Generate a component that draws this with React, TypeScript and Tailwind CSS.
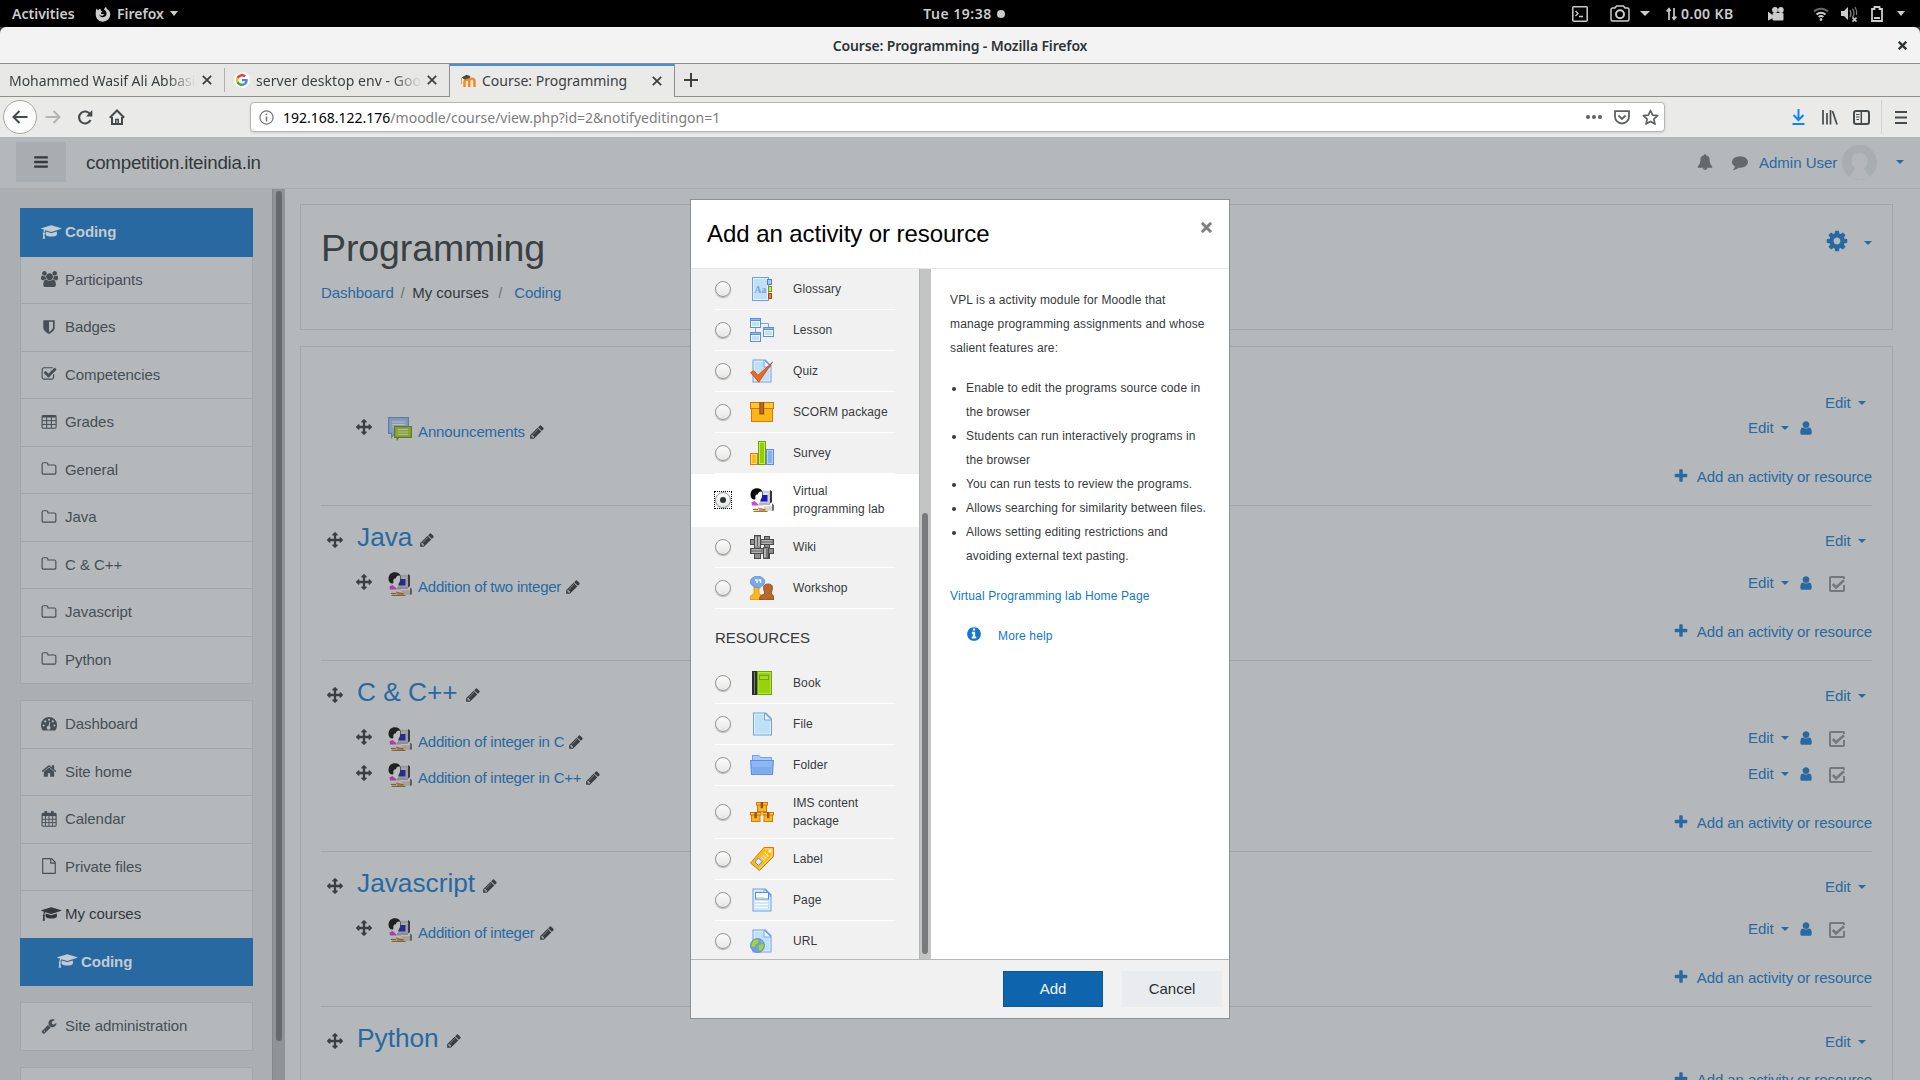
import React from "react";

/* ---------- glyph icons on a 1792 grid ---------- */
const P = {
  folder: "M1600 1312v-704q0-40-28-68t-68-28h-704q-40 0-68-28t-28-68v-64q0-40-28-68t-68-28h-320q-40 0-68 28t-28 68v960q0 40 28 68t68 28h1216q40 0 68-28t28-68zm128-704v704q0 92-66 158t-158 66h-1216q-92 0-158-66t-66-158v-960q0-92 66-158t158-66h320q92 0 158 66t66 158v32h672q92 0 158 66t66 158z",
  plus: "M1600 736v192q0 40-28 68t-68 28h-416v416q0 40-28 68t-68 28h-192q-40 0-68-28t-28-68v-416h-416q-40 0-68-28t-28-68v-192q0-40 28-68t68-28h416v-416q0-40 28-68t68-28h192q40 0 68 28t28 68v416h416q40 0 68 28t28 68z",
  user: "M1536 1399q0 109-62.5 187t-150.500 78h-854q-88 0-150.500-78t-62.500-187q0-85 8.500-160.500t31.500-152 58.500-131 94-89 134.500-34.500q131 128 313 128t313-128q76 0 134.500 34.500t94 89 58.500 131 31.500 152 8.500 160.500zm-256-887q0 159-112.500 271.500t-271.500 112.500-271.500-112.500-112.500-271.500 112.500-271.500 271.500-112.500 271.500 112.500 112.500 271.500z",
  arrows: "M1792 896q0 26-19 45l-256 256q-19 19-45 19t-45-19-19-45v-128h-384v384h128q26 0 45 19t19 45-19 45l-256 256q-19 19-45 19t-45-19l-256-256q-19-19-19-45t19-45 45-19h128v-384h-384v128q0 26-19 45t-45 19-45-19l-256-256q-19-19-19-45t19-45l256-256q19-19 45-19t45 19 19 45v128h384v-384h-128q-26 0-45-19t-19-45 19-45l256-256q19-19 45-19t45 19l256 256q19 19 19 45t-19 45-45 19h-128v384h384v-128q0-26 19-45t45-19 45 19l256 256q19 19 19 45z",
  pencil: "M491 1536l91-91-235-235-91 91v107h128v128h107zm523-928q0-22-22-22-10 0-17 7l-542 542q-7 7-7 17 0 22 22 22 10 0 17-7l542-542q7-7 7-17zm-54-192l416 416-832 832h-416v-416zm683 96q0 53-37 90l-166 166-416-416 166-165q36-38 90-38 53 0 91 38l235 234q37 39 37 91z",
  bars: "M1664 1344v128q0 26-19 45t-45 19h-1408q-26 0-45-19t-19-45v-128q0-26 19-45t45-19h1408q26 0 45 19t19 45zm0-512v128q0 26-19 45t-45 19h-1408q-26 0-45-19t-19-45v-128q0-26 19-45t45-19h1408q26 0 45 19t19 45zm0-512v128q0 26-19 45t-45 19h-1408q-26 0-45-19t-19-45v-128q0-26 19-45t45-19h1408q26 0 45 19t19 45z",
  cap: "M1774 836l18 316q4 69-82 128t-235 93.500-323 34.500-323-34.500-235-93.500-82-128l18-316 574 181q22 7 48 7t48-7zm530-324q0 23-22 31l-1120 352q-4 1-10 1t-10-1l-652-206q-43 34-71 111.500t-34 178.500q63 36 63 109 0 69-58 107l58 433q2 14-8 25-9 11-24 11h-192q-15 0-24-11-10-11-8-25l58-433q-58-38-58-107 0-73 65-111 11-207 98-330l-333-104q-22-8-22-31t22-31l1120-352q4-1 10-1t10 1l1120 352q22 8 22 31z",
  home: "M1472 992v480q0 26-19 45t-45 19h-384v-384h-256v384h-384q-26 0-45-19t-19-45v-480q0-1 .5-3t.5-3l575-474 575 474q1 2 1 6zm223-69l-62 74q-8 9-21 11h-3q-13 0-21-7l-692-577-692 577q-12 8-24 7-13-2-21-11l-62-74q-8-10-7-23.500t11-21.500l719-599q32-26 76-26t76 26l244 204v-195q0-14 9-23t23-9h192q14 0 23 9t9 23v408l219 182q10 8 11 21.500t-7 23.500z",
  file: "M1596 380q28 28 48 76t20 88v1152q0 40-28 68t-68 28h-1344q-40 0-68-28t-28-68v-1600q0-40 28-68t68-28h896q40 0 88 20t76 48zm-444-244v376h376q-10-29-22-41l-313-313q-12-12-41-22zm384 1528v-1024h-416q-40 0-68-28t-28-68v-416h-768v1536h1280z",
  wrench: "M448 1472q0-26-19-45t-45-19-45 19-19 45 19 45 45 19 45-19 19-45zm644-420l-682 682q-37 37-90 37-52 0-91-37l-106-108q-38-36-38-90 0-53 38-91l681-681q39 98 114.500 173.500t173.500 114.500zm634-435q0 39-23 106-47 134-164.500 217.500t-258.500 83.500q-185 0-316.500-131.500t-131.500-316.500 131.500-316.500 316.500-131.500q58 0 121.500 16.500t107.500 46.500q16 11 16 28t-16 28l-293 169v224l193 107q5-3 79-48.500t135.500-81 70.500-35.500q15 0 23.500 10t8.500 25z",
  check: "M1472 930v318q0 119-84.500 203.500t-203.500 84.500h-832q-119 0-203.500-84.500t-84.500-203.500v-832q0-119 84.500-203.500t203.500-84.500h832q63 0 117 25 15 7 18 23 3 17-9 29l-49 49q-10 10-23 10-3 0-9-2-23-6-45-6h-832q-66 0-113 47t-47 113v832q0 66 47 113t113 47h832q66 0 113-47t47-113v-254q0-13 9-22l64-64q10-10 23-10 6 0 12 3 20 8 20 29zm231-489l-814 814q-24 24-57 24t-57-24l-430-430q-24-24-24-57t24-57l110-110q24-24 57-24t57 24l263 263 647-647q24-24 57-24t57 24l110 110q24 24 24 57t-24 57z",
  info: "M1152 1376v-160q0-14-9-23t-23-9h-96v-512q0-14-9-23t-23-9h-320q-14 0-23 9t-9 23v160q0 14 9 23t23 9h96v320h-96q-14 0-23 9t-9 23v160q0 14 9 23t23 9h448q14 0 23-9t9-23zm-128-896v-160q0-14-9-23t-23-9h-192q-14 0-23 9t-9 23v160q0 14 9 23t23 9h192q14 0 23-9t9-23zm640 416q0 209-103 385.500t-279.500 279.500-385.500 103-385.500-103-279.500-279.500-103-385.500 103-385.500 279.500-279.500 385.500-103 385.500 103 279.500 279.500 103 385.500z",
  cog: "M1152 896q0-106-75-181t-181-75-181 75-75 181 75 181 181 75 181-75 75-181zm512-109v222q0 12-8 23t-20 13l-185 28q-19 54-39 91 35 50 107 138 10 12 10 25t-9 23q-27 37-99 108t-94 71q-12 0-26-9l-138-108q-44 23-91 38-16 136-29 186-7 28-36 28h-222q-14 0-24.500-8.500t-11.500-21.500l-28-184q-49-16-90-37l-141 107q-10 9-25 9-14 0-25-11-126-114-165-168-7-10-7-23 0-12 8-23 15-21 51-66.500t54-70.500q-27-50-41-99l-183-27q-13-2-21-12.500t-8-23.500v-222q0-12 8-23t19-13l186-28q14-46 39-92-40-57-107-138-10-12-10-24 0-10 9-23 26-36 98.500-107.500t94.500-71.500q13 0 26 10l138 107q44-23 91-38 16-136 29-186 7-28 36-28h222q14 0 24.500 8.500t11.500 21.500l28 184q49 16 90 37l142-107q9-9 24-9 13 0 25 10 129 119 165 170 7 8 7 22 0 12-8 23-15 21-51 66.500t-54 70.500q26 50 41 98l183 28q13 2 21 12.500t8 23.500z",
  bell: "M912 1696q0-16-16-16-59 0-101.500-42.500t-42.500-101.500q0-16-16-16t-16 16q0 73 51.500 124.500t124.500 51.500q16 0 16-16zm816-288q0 52-38 90t-90 38h-448q0 106-75 181t-181 75-181-75-75-181h-448q-52 0-90-38t-38-90q50-42 91-88t85-119.500 74.500-158.500 50-206 19.500-260q0-152 117-282.500t307-158.500q-8-19-8-39 0-40 28-68t68-28 68 28 28 68q0 20-8 39 190 28 307 158.500t117 282.500q0 139 19.500 260t50 206 74.500 158.500 85 119.500 91 88z",
  comment: "M1792 896q0 174-120 321.500t-326 233-450 85.500q-70 0-145-8-198 175-460 242-49 14-114 22-17 2-30.500-9t-17.500-29v-1q-3-4-.5-12t2-10 4.500-9.500l6-9 7-8.500 8-9q7-8 31-34.500t34.500-38 31-39.500 32.500-51 27-59 26-76q-157-89-247.500-220t-90.500-281q0-130 71-248.500t191-204.500 286-136.500 348-50.500q244 0 450 85.500t326 233 120 321.500z",
  users: "M593 896q-162 5-265 128h-134q-82 0-138-40.500t-56-118.500q0-353 124-353 6 0 43.500 21t97.500 42.500 119 21.500q67 0 133-23-5 37-5 66 0 139 81 256zm1071 637q0 120-73 189.500t-194 69.500h-874q-121 0-194-69.500t-73-189.500q0-53 3.500-103.500t14-109 26.500-108.500 43-97.500 62-81 85.500-53.500 111.500-20q10 0 43 21.500t73 48 107 48 135 21.500 135-21.500 107-48 73-48 43-21.500q61 0 111.500 20t85.500 53.500 62 81 43 97.500 26.500 108.500 14 109 3.500 103.500zm-1024-1277q0 106-75 181t-181 75-181-75-75-181 75-181 181-75 181 75 75 181zm704 384q0 159-112.500 271.500t-271.500 112.500-271.500-112.500-112.500-271.500 112.500-271.500 271.500-112.500 271.500 112.500 112.500 271.500zm576 225q0 78-56 118.500t-138 40.500h-134q-103-123-265-128 81-117 81-256 0-29-5-66 66 23 133 23 59 0 119-21.500t97.500-42.500 43.500-21q124 0 124 353zm-128-609q0 106-75 181t-181 75-181-75-75-181 75-181 181-75 181 75 75 181z",
  shield: "M1344 960v-640h-448v1137q119-63 213-137 235-184 235-360zm192-768v768q0 86-33.500 170.500t-83 150-118 127.500-126.500 103-121 77.500-89.500 49.500-42.500 20q-12 6-26 6t-26-6q-16-7-42.500-20t-89.500-49.500-121-77.500-126.500-103-118-127.500-83-150-33.500-170.500v-768q0-26 19-45t45-19h1152q26 0 45 19t19 45z",
};

type GlyphName = keyof typeof P;

function Glyph({ name, size = 16, className = "" }: { name: GlyphName; size?: number; className?: string }) {
  const vw = name === "cap" ? 2304 : name === "users" ? 1920 : 1792;
  return (
    <svg width={(size * vw) / 1792} height={size} viewBox={`0 0 ${vw} 1792`} fill="currentColor" className={`shrink-0 ${className}`}>
      <path d={P[name]} />
    </svg>
  );
}

function TableIcon() {
  return (
    <svg width="16" height="16" viewBox="0 0 16 16" fill="none" stroke="currentColor">
      <rect x="1.1" y="1.600" width="14" height="12.600" rx="1.2" strokeWidth="1.1" />
      <path d="M1 2.500h14" strokeWidth="2" />
      <path d="M1 6.700h14M1 10.400h14M5.700 3v11M10.400 3v11" strokeWidth="1" />
    </svg>
  );
}

function CalendarIcon() {
  return (
    <svg width="16" height="16" viewBox="0 0 16 16" fill="none" stroke="currentColor">
      <rect x="1.1" y="2.2" width="14" height="13" rx="1" strokeWidth="1.1" />
      <path d="M1 3.6h14" strokeWidth="3" />
      <path d="M4.800 0.300v3.200M11.300 0.300v3.200" strokeWidth="2.600" strokeLinecap="round" />
      <path d="M1 8.300h14M1 11.600h14M4.500 5v10M8 5v10M11.600 5v10" strokeWidth="0.900" />
    </svg>
  );
}

function GaugeIcon() {
  return (
    <svg width="16" height="16" viewBox="0 0 16 16">
      <path d="M0 9a8 8 0 0 1 16 0c0 2-.6 3.500-1.500 5.100-.2.400-.4.500-.8.500H2.300c-.4 0-.6-.1-.8-.5C.6 12.500 0 11 0 9z" fill="currentColor" />
      <g fill="#b4b8bb">
        <circle cx="2.600" cy="9.500" r="1.050" />
        <circle cx="4.200" cy="5.400" r="1.050" />
        <circle cx="8" cy="3.700" r="1.050" />
        <circle cx="11.800" cy="5.400" r="1.050" />
        <circle cx="13.400" cy="9.500" r="1.050" />
        <path d="M8.500 5.800l.8.200-.6 4a2 2 0 1 1-1.200-.3z" />
      </g>
    </svg>
  );
}

function Caret() {
  return <span className="block h-0 w-0 border-x-[4px] border-t-[4px] border-x-transparent border-t-[#2869a2]" />;
}

/* ---------- activity pictures ---------- */
const sheet = "M2.500.5h13l6 6v17h-19z";
function Sheet({ x = 0 }: { x?: number }) {
  return (
    <g transform={`translate(${x} 0)`}>
      <path d={sheet} fill="#6f9de8" />
      <path d="M3.500 1.500h11l6 6v15h-17z" fill="#e4f4fd" />
      <path d="M4.500 2.500h10v5.500h5v13.500h-15z" fill="#bfe1f8" />
      <path d="M14 1v7h7z" fill="#e9f6fe" stroke="#78a4ea" strokeWidth="1" />
    </g>
  );
}

function Box({ x, y, w, h }: { x: number; y: number; w: number; h: number }) {
  return (
    <g>
      <rect x={x + 1} y={y + h * 0.3} width={w - 2} height={h * 0.7} fill="#d87a12" />
      <rect x={x + 2} y={y + h * 0.3} width={w - 4} height={h * 0.7 - 1} fill="#fbb713" />
      <rect x={x} y={y} width={w} height={h * 0.35} fill="#d27415" />
      <rect x={x + 1} y={y + 1} width={w - 2} height={h * 0.35 - 2} fill="#fdc92d" />
      <rect x={x + w * 0.39} y={y} width={w * 0.2} height={h * 0.62} fill="#8a4a12" />
      <rect x={x + w * 0.39 + 1} y={y} width={w * 0.2 - 2 > 0 ? w * 0.2 - 2 : 0.6} height={h * 0.55} fill="#b8682a" />
    </g>
  );
}

function Win({ x, y }: { x: number; y: number }) {
  return (
    <g>
      <rect x={x} y={y} width="11" height="10" fill="#5a8fe0" />
      <rect x={x + 1} y={y + 3} width="9" height="6" fill="#eff8fe" />
      <rect x={x + 2} y={y + 4} width="7" height="4" fill="#bfe1f8" />
      <rect x={x + 1} y={y + 1} width="9" height="1" fill="#8db8f2" />
    </g>
  );
}

function Pic({ kind, dim = false }: { kind: string; dim?: boolean }) {
  return (
    <svg width="24" height="24" viewBox="0 0 24 24" className={dim ? "shrink-0 opacity-85 brightness-[.74]" : "shrink-0"}>
      {kind === "forum" && (
        <>
          <path d="M0 0h21v17H7l-4 5v-5H0z" fill="#6a9ae8" />
          <path d="M1.200 1.200h18.600v14.600H6.500L4 19v-3.200H1.200z" fill="#a9cdf8" />
          <path d="M4 5h13M4 7.500h13M4 10h13" stroke="#fff" strokeWidth="1" />
          <path d="M6 9h18v12H11l-2.500 3.500V21H6z" fill="#6f9c10" />
          <path d="M7.200 10.200h15.600v9.600H7.200z" fill="#aadb2a" />
          <path d="M10 12.500h10M10 15h10M10 17.500h10" stroke="#f4fbe0" strokeWidth="1" />
        </>
      )}
      {kind === "glossary" && (
        <>
          <rect x="2" y="0" width="17" height="24" fill="#6f9de8" />
          <rect x="3" y="1" width="15" height="22" fill="#e4f4fd" />
          <rect x="4" y="2" width="13" height="20" fill="#bfe1f8" />
          <text x="4.600" y="16" fontFamily="Liberation Serif, serif" fontWeight="700" fontSize="9.500" fill="#7ba0e4">Aa</text>
          <rect x="17.500" y="2.500" width="4" height="5" fill="#a9c7f6" stroke="#4c7fd8" />
          <rect x="18.500" y="9.500" width="3" height="5" fill="#cdea4c" stroke="#6f9c10" />
          <rect x="18.500" y="16.500" width="3" height="5" fill="#f07a30" stroke="#b94310" />
        </>
      )}
      {kind === "lesson" && (
        <>
          <path d="M11 5.500h7.500V9M5.500 10v4" stroke="#78a4ea" fill="none" />
          <Win x={0} y={0} />
          <Win x={13} y={9} />
          <Win x={0} y={14} />
        </>
      )}
      {kind === "quiz" && (
        <>
          <Sheet />
          <path d="M.5 13.500l3.500-1.800 3.800 4.600L22.500 3.200 8.800 23.200z" fill="#f0681c" stroke="#c24a10" strokeWidth=".8" />
        </>
      )}
      {kind === "scorm" && <Box x={0} y={2} w={24} h={20} />}
      {kind === "survey" && (
        <>
          <rect x=".5" y="12.500" width="7" height="11" fill="#fdb81a" stroke="#dc7c14" />
          <rect x="1.500" y="13.500" width="5" height="9" fill="none" stroke="#fedd7c" />
          <rect x="8.500" y=".5" width="7" height="23" fill="#93cc08" stroke="#6da30a" />
          <rect x="9.500" y="1.500" width="5" height="21" fill="none" stroke="#c3ee4c" />
          <rect x="16.500" y="8.500" width="7" height="15" fill="#86aef0" stroke="#5a8fe0" />
          <rect x="17.500" y="9.500" width="5" height="13" fill="none" stroke="#b5d3fa" />
        </>
      )}
      {kind === "vpl" && (
        <>
          <path d="M9 2h11l2 1.500V14l-2 1.500H10z" fill="#c9c9c9" />
          <path d="M20 2l2 1.500V14l-2 1.500z" fill="#333" />
          <path d="M9 2h11v1H9z" fill="#efefef" />
          <rect x="10" y="4.500" width="8.500" height="9" fill="#dedede" />
          <path d="M11.500 7h6v6.500h-7z" fill="#1414c8" />
          <path d="M3 10l5-7 4 1v6l-2 2v3l-5 1z" fill="#fff" />
          <path d="M.5 7C.5 2 4 0 7 .2c3 .1 5 1.300 5.500 3.800-2.500-1.200-4 0-4.500 2-.8 1-1.500 0-2.300 1.200-1 1.800.3 3-.7 4.300-2.800.2-4.500-2-4.500-4.500z" fill="#0a0a0a" />
          <path d="M12.500 4v4.500l-1.500 4" stroke="#333" strokeWidth=".7" fill="none" />
          <path d="M1.500 14.500l3-1.500 4 3.500v1H2z" fill="#e13be0" />
          <path d="M9 15h11v2.500H9z" fill="#b5b5b5" />
          <path d="M13 17h9l2 1.500V23l-9-.5z" fill="#d6d6d6" />
          <path d="M13 17h9v1.200h-9z" fill="#fff" />
          <path d="M22 15.500l2 1.500v5l-2 1z" fill="#6f6f6f" />
          <path d="M2.500 20.500h15l1 1.500-1 1H4z" fill="#e9d98a" />
          <path d="M3 21.500h5M9 22h6M3.500 23.500h14" stroke="#8a6a28" strokeWidth=".9" />
          <path d="M8 20l8 2" stroke="#d33" strokeWidth=".8" />
        </>
      )}
      {kind === "wiki" && (
        <g stroke="#4a4a4a" fill="#8e8e8e">
          <rect x="4.500" y=".5" width="6" height="23" />
          <rect x="14.500" y="1.500" width="5" height="22" />
          <rect x=".5" y="4.500" width="23" height="5" />
          <rect x=".5" y="13.500" width="23" height="5" />
          <path d="M4.500 11.500V.5h6v11M13.500 12.500h5v11h-5z" />
          <path d="M6 2v9M9 2v9M15 14v8M12 6h10M2 15h9M12 8h10M2 17h9" stroke="#d6d6d6" fill="none" />
          <path d="M7.500 1v10M17 14v9M11 7h12M1 16h11" stroke="#5e5e5e" fill="none" />
        </g>
      )}
      {kind === "workshop" && (
        <>
          <path d="M0 23.500v-3l4-3V11h5v6.500l4 3v3z" fill="#fdb81a" stroke="#dc8a14" strokeWidth=".8" />
          <ellipse cx="7.500" cy="5.800" rx="7.200" ry="5.600" fill="#7ca8f0" stroke="#5c8ee0" strokeWidth=".8" />
          <path d="M8 10l2 3.500 1-4z" fill="#7ca8f0" />
          <path d="M5 4h2v3M8.500 4h2v3" stroke="#fff" strokeWidth="1.300" fill="none" />
          <path d="M9.500 23.500c0-3 1-4.300 5-5.500v-2c-2-5-1.200-8 3.500-8s5.500 3 3.500 8v2c1.500.8 2.500 2 2.500 5.500z" fill="#b9672a" stroke="#8d4514" strokeWidth=".8" />
        </>
      )}
      {kind === "book" && (
        <>
          <rect x="2" y="0" width="6" height="24" fill="#2a2e26" />
          <rect x="4" y="1" width="1" height="22" fill="#777" />
          <rect x="7" y="0" width="15" height="24" fill="#6da30a" />
          <rect x="8" y="1" width="13" height="22" fill="#b4e83a" />
          <rect x="8.500" y="2" width="11.500" height="20" fill="#97d30b" />
          <rect x="9.500" y="4.500" width="9" height="4" fill="#a5dd22" stroke="#6da30a" />
        </>
      )}
      {kind === "file" && <Sheet x={0.5} />}
      {kind === "folder" && (
        <>
          <path d="M2 2h7l2 2h11v6H2z" fill="#74a3ec" />
          <path d="M3 3h6l2 2h10v4H3z" fill="#a6cbf8" />
          <path d="M0 7h24l-1 15H1z" fill="#5c8ee4" />
          <path d="M1.200 8h21.600l-.9 13H2.100z" fill="#8db6f4" />
          <path d="M2.500 14h19l-.5 6.500H3z" fill="#7fa9ee" />
        </>
      )}
      {kind === "ims" && (
        <>
          <Box x={6} y={2} w={12} h={10} />
          <Box x={0} y={12} w={11.5} h={10} />
          <Box x={12.5} y={12} w={11.5} h={10} />
        </>
      )}
      {kind === "label" && (
        <>
          <path d="M14 .5h9.500v9L9.500 23.500l-9-7.500z" fill="#fdb81a" stroke="#d07a14" />
          <path d="M14.500 2h7.500v7L9.500 21.500" fill="none" stroke="#fede80" strokeWidth=".9" />
          <circle cx="20" cy="4" r="1.600" fill="#fff" />
          <path d="M8.500 11l3.500 3.500-3.500 4L5 15z" fill="#dff1fd" stroke="#5c8ee0" />
          <path d="M11 10l3.500 3.500M13 8l3.500 3.500M15 6l3.500 3.500" stroke="#fff3c8" strokeWidth="1.100" />
        </>
      )}
      {kind === "page" && (
        <>
          <Sheet />
          <rect x="5.500" y="4.500" width="13" height="6.500" fill="#f4fbff" stroke="#5a8fe0" />
          <rect x="6" y="9" width="8" height="1.500" fill="#ecd9a0" />
          <path d="M5 13.500h13M5 16.500h13M5 19.500h13" stroke="#fff" strokeWidth="1.300" />
        </>
      )}
      {kind === "url" && (
        <>
          <Sheet />
          <circle cx="7.500" cy="16.500" r="7" fill="#6f9de8" stroke="#5484d8" strokeWidth=".8" />
          <path d="M2 14l3-3.500 4 .5-1 3-2.500 1.500L4 18.500 1.500 17zM9 16l4-1 1 2-2.500 4-2 1-1-3zM11 11.500l2.500 2-2 .5z" fill="#a4dc14" />
        </>
      )}
    </svg>
  );
}

/* ---------- desktop top bar ---------- */
function TopBar() {
  return (
    <div className="grid h-[27px] grid-cols-3 items-center bg-black text-[14px] font-semibold text-[#cccccc]">
      <div className="flex items-center pl-3">
        <span className="w-[83px] tracking-[0.02px]">Activities</span>
        <svg width="16" height="16" viewBox="0 0 16 16" className="mr-[6px]">
          <path d="M1.500 2.500L3 4.200C3.800 3 5.200 2.700 6 3c-.8.800-.6 1.500.6 1.900 1 .3.800.8 0 1.300-.9.500-1 1.400.1 1.700 1.200.3 2-.1 2.900.5-1 .2-1.300 1.300-3 1.300-1.200 0-2-.8-2.400-1.500.3 2 1.800 3 3.700 3 2.300 0 3.900-1.900 3.600-4.200C11.300 5.500 10.400 4.300 9 3.500c.6-1.300 1.200-2 2.200-2.700-.1 1.200.6 2 1.300 2.700 1.800.7 2.800 2.700 2.800 5A7.300 7.300 0 0 1 8 15.700C3.900 15.700.7 12.500.7 8.500c0-2.300.1-4.400.8-6z" fill="currentColor" />
        </svg>
        <span className="w-[48px]">Firefox</span>
        <span className="ml-[5px] h-0 w-0 border-x-[4.500px] border-t-[5px] border-x-transparent border-t-[#cccccc]" />
      </div>
      <div className="flex items-center justify-center gap-[5px] pl-[8px]">
        <span className="tracking-[0.5px]">Tue 19:38</span>
        <span className="h-2 w-2 rounded-full bg-[#cccccc]" />
      </div>
      <div className="flex items-center justify-end pr-[15px]">
        <svg width="16" height="16" viewBox="0 0 16 16" fill="none" stroke="currentColor" className="mr-[22px]">
          <rect x=".8" y=".8" width="14.400" height="14.400" rx="1" strokeWidth="1.500" />
          <path d="M3.500 5l2.500 2.500L3.500 10M7 10.500h4" strokeWidth="1.300" />
        </svg>
        <svg width="20" height="17" viewBox="0 0 20 17" fill="none" stroke="currentColor" strokeWidth="1.500" className="mr-[10px]">
          <path d="M1 4.500a1.500 1.500 0 0 1 1.500-1.500H5l1.500-2h7L15 3h2.500A1.500 1.500 0 0 1 19 4.500v10a1.500 1.500 0 0 1-1.500 1.500h-15A1.500 1.500 0 0 1 1 14.500z" />
          <circle cx="10" cy="9.200" r="4" strokeWidth="2" />
        </svg>
        <span className="mr-[16px] h-0 w-0 border-x-[5px] border-t-[5px] border-x-transparent border-t-[#cccccc]" />
        <svg width="11" height="14" viewBox="0 0 11 14" fill="none" stroke="currentColor" strokeWidth="1.700" className="mr-[4px]">
          <path d="M3 13V2M.7 4.500L3 1.700l1.500 2.200M8 1v11M6.500 10L8 12.300l2.300-2.800" />
        </svg>
        <span className="mr-[31px] w-[56px] whitespace-nowrap tracking-[0.4px]">0.00 KB</span>
        <svg width="16" height="14" viewBox="0 0 16 14" fill="currentColor" className="mr-[29px]">
          <circle cx="7" cy="3" r="2.900" />
          <circle cx="12.800" cy="3" r="2.900" />
          <rect x="4.500" y="6" width="11" height="7.500" rx="1" />
          <path d="M0 4.500l5 4v2.500l-5 2.500z" />
        </svg>
        <svg width="16" height="14" viewBox="0 0 16 14" fill="none" stroke="currentColor" strokeWidth="2" className="mr-[12px]">
          <path d="M1 4.500a10 10 0 0 1 14 0" stroke="#666" />
          <path d="M3.500 7.500a6.500 6.500 0 0 1 9 0" />
          <path d="M5.700 10a3.200 3.200 0 0 1 4.600 0" />
          <circle cx="8" cy="12.500" r="1" fill="currentColor" strokeWidth="1" />
        </svg>
        <svg width="18" height="16" viewBox="0 0 18 16" className="mr-[12px]">
          <path d="M0 5h3l4-4v13l-4-4H0z" fill="currentColor" />
          <path d="M9 4q2 3.500 0 7M11.500 2.500q3 5 0 9M14 1q2.500 4 1.500 8" stroke="#777" fill="none" strokeWidth="1.300" />
          <path d="M11.500 11.500l4 4M15.500 11.500l-4 4" stroke="currentColor" strokeWidth="1.700" />
        </svg>
        <svg width="12" height="16" viewBox="0 0 12 16" fill="none" className="mr-[14px]">
          <path d="M1 3h2.500V1h5v2H11v12H1z" stroke="currentColor" strokeWidth="1.800" />
          <path d="M3 12h6" stroke="currentColor" strokeWidth="2" />
        </svg>
        <span className="h-0 w-0 border-x-[4.500px] border-t-[5px] border-x-transparent border-t-[#cccccc]" />
      </div>
    </div>
  );
}

function Cross({ size = 10, width = 1.8, className = "" }: { size?: number; width?: number; className?: string }) {
  return (
    <svg width={size} height={size} viewBox="0 0 10 10" stroke="currentColor" strokeWidth={width} className={`shrink-0 ${className}`}>
      <path d="M.8.800l8.400 8.400M9.200.800L.800 9.200" />
    </svg>
  );
}

function TitleBar() {
  return (
    <div className="bg-[#3a3a3a]">
      <div className="grid h-[37px] grid-cols-[40px_1fr_40px] items-center rounded-t-[6px] border-b border-[#8f8f8a] bg-[#f3f3f3] text-[#2e3436]">
        <span />
        <span className="text-center text-[14px] font-semibold tracking-[-0.15px]">Course: Programming - Mozilla Firefox</span>
        <Cross size={9} width={2.6} className="ml-[18px]" />
      </div>
    </div>
  );
}

function TabStrip() {
  return (
    <div className="flex h-[33px] bg-[#e7e7e5] text-[14px] text-[#3b4143]">
      <div className="flex w-[224px] items-center border-b border-[#8f8f8a] pl-[9px]">
        <span className="w-[187px] overflow-hidden whitespace-nowrap tracking-[-0.05px] [mask-image:linear-gradient(to_right,black_84%,transparent)]">Mohammed Wasif Ali Abbasi</span>
        <Cross className="ml-[6px]" />
      </div>
      <div className="flex w-[225px] items-center border-b border-[#8f8f8a]">
        <span className="h-6 w-px bg-[#b0b0ac]" />
        <span className="ml-[9px] flex h-4 w-4 items-center justify-center rounded-full bg-white">
          <svg width="12" height="12" viewBox="0 0 48 48">
            <path fill="#EA4335" d="M24 9.500c3.540 0 6.710 1.220 9.210 3.600l6.850-6.850C35.900 2.380 30.470 0 24 0 14.620 0 6.510 5.380 2.560 13.220l7.980 6.190C12.430 13.720 17.740 9.500 24 9.500z" />
            <path fill="#4285F4" d="M46.980 24.550c0-1.570-.15-3.090-.38-4.550H24v9.020h12.940c-.58 2.960-2.260 5.480-4.780 7.180l7.730 6c4.510-4.180 7.090-10.360 7.090-17.650z" />
            <path fill="#FBBC05" d="M10.530 28.590c-.48-1.450-.76-2.990-.76-4.590s.27-3.140.76-4.590l-7.980-6.190C.92 16.460 0 20.120 0 24c0 3.880.92 7.540 2.560 10.780l7.970-6.190z" />
            <path fill="#34A853" d="M24 48c6.480 0 11.930-2.130 15.890-5.810l-7.730-6c-2.150 1.450-4.920 2.300-8.160 2.300-6.260 0-11.570-4.220-13.470-9.910l-7.980 6.190C6.510 42.620 14.620 48 24 48z" />
          </svg>
        </span>
        <span className="ml-[6px] w-[166px] overflow-hidden whitespace-nowrap tracking-[0.05px] [mask-image:linear-gradient(to_right,black_82%,transparent)]">server desktop env - Google</span>
        <Cross className="ml-[5px]" />
      </div>
      <div className="flex w-[226px] items-center border-x border-t-2 border-x-[#8f8f8a] border-t-[#4a90d9] bg-[#eaeae9] pb-[2px] pl-[10px]">
        <svg width="16" height="14" viewBox="0 0 16 14">
          <path d="M4.500 13V7.500a2.600 2.600 0 0 1 4.500-1M9.200 13V7.500a2.600 2.600 0 0 1 5.300 0V13" fill="none" stroke="#f58a1f" strokeWidth="2.500" />
          <path d="M1.500 3.500L6.500.8l4 1.400-1 2-5 1.300z" fill="#4a4a4a" />
          <path d="M1.500 4v6" stroke="#c8895a" strokeWidth=".8" />
        </svg>
        <span className="ml-[6px] w-[166px] whitespace-nowrap">Course: Programming</span>
        <Cross className="ml-[4px]" />
      </div>
      <div className="flex flex-1 items-center border-b border-[#8f8f8a] pl-[9px]">
        <svg width="14" height="14" viewBox="0 0 14 14" stroke="currentColor" strokeWidth="2">
          <path d="M7 0v14M0 7h14" />
        </svg>
      </div>
    </div>
  );
}

function ToolBar() {
  return (
    <div className="flex h-10 items-center bg-[#eaeae9] text-[#454b4d]">
      <div className="flex w-[250px] items-center pl-[3px]">
        <span className="flex h-[34px] w-[34px] items-center justify-center rounded-full border border-[#a8a8a4] bg-[#fbfbfb]">
          <svg width="16" height="14" viewBox="0 0 16 14" fill="none" stroke="currentColor" strokeWidth="2">
            <path d="M15.500 7H1.500M7.500 1L1.500 7l6 6" />
          </svg>
        </span>
        <svg width="16" height="14" viewBox="0 0 16 14" fill="none" stroke="#b3b5b5" strokeWidth="2" className="ml-[8px]">
          <path d="M.5 7h14M8.500 1l6 6-6 6" />
        </svg>
        <svg width="16" height="15" viewBox="0 0 16 15" className="ml-[16px]">
          <path d="M13.300 4.500A6 6 0 1 0 13.500 10" fill="none" stroke="currentColor" strokeWidth="2.100" />
          <path d="M15.300 0v6.500H9z" fill="currentColor" />
        </svg>
        <svg width="16" height="16" viewBox="0 0 16 16" fill="none" stroke="currentColor" className="ml-[16px]">
          <path d="M.8 8.700L8 1.500l7.200 7.200" strokeWidth="2" />
          <path d="M3 8v7h10V8" strokeWidth="2" />
          <path d="M6.800 15v-4.500h2.400V15" strokeWidth="1.500" />
        </svg>
      </div>
      <div className="flex h-[30px] w-[1415px] items-center rounded-[4px] border border-[#b6b6b2] bg-white pl-[8px] pr-[5px] shadow-sm">
        <svg width="15" height="15" viewBox="0 0 15 15" fill="none" stroke="#757575">
          <circle cx="7.500" cy="7.500" r="6.600" strokeWidth="1.200" />
          <path d="M7.500 6.500v5M7.500 3.500v1.600" strokeWidth="1.500" />
        </svg>
        <span className="ml-[9px] flex-1 text-[14px] text-[#7d7d7d]">
          <span className="text-black">192.168.122.176</span>/moodle/course/view.php?id=2&amp;notifyeditingon=1
        </span>
        <svg width="16" height="4" viewBox="0 0 16 4" fill="#5e6162">
          <circle cx="2" cy="2" r="2" />
          <circle cx="8" cy="2" r="2" />
          <circle cx="14" cy="2" r="2" />
        </svg>
        <svg width="16" height="15" viewBox="0 0 16 15" fill="none" stroke="#5e6162" strokeWidth="1.800" className="ml-[12px]">
          <path d="M1 1.200h14v5.300a7 7 0 0 1-14 0z" />
          <path d="M4.500 5.500L8 9l3.500-3.500" />
        </svg>
        <svg width="17" height="17" viewBox="0 0 17 17" fill="none" stroke="#5e6162" strokeWidth="1.700" strokeLinejoin="round" className="ml-[12px]">
          <path d="M8.500 1.500l2.100 4.700 5.100.5-3.900 3.400 1.200 5-4.500-2.700L4 15.100l1.200-5L1.300 6.700l5.100-.5z" />
        </svg>
      </div>
      <div className="flex flex-1 items-center">
        <svg width="13" height="16" viewBox="0 0 13 16" fill="none" stroke="#0a84ff" strokeWidth="2" className="ml-[127px]">
          <path d="M6.500 0v11M1.500 6l5 5 5-5M.5 15h12" />
        </svg>
        <svg width="16" height="15" viewBox="0 0 16 15" fill="none" stroke="currentColor" strokeWidth="2" className="ml-[17px]">
          <path d="M1 0v14.500M5 3v11.500M8.500 0v14.500M10.500 1l4.500 13.500" strokeWidth="1.700" />
        </svg>
        <svg width="17" height="15" viewBox="0 0 17 15" fill="none" stroke="currentColor" className="ml-[15px]">
          <rect x="1" y="1" width="15" height="13" rx="2" strokeWidth="2" />
          <path d="M8.300 1v13" strokeWidth="1.500" />
          <path d="M3 4.500h3.500M3 7h3.500M3.500 9.500H6" strokeWidth="1.100" />
        </svg>
        <span className="ml-[11px] h-[34px] w-px bg-[#d2d2cf]" />
        <svg width="12" height="13" viewBox="0 0 12 13" stroke="currentColor" strokeWidth="2" className="ml-[13px]">
          <path d="M0 1h12M0 6.500h12M0 12h12" />
        </svg>
      </div>
    </div>
  );
}

/* ---------- page ---------- */
function NavBar() {
  return (
    <div className="flex h-[52px] items-center border-b border-[#a9adb0] pb-px pl-4 pr-4">
      <span className="flex h-10 w-[50px] items-center justify-center bg-[#a8adb1] text-[#343a40]">
        <Glyph name="bars" size={16} />
      </span>
      <span className="ml-5 mt-px flex-1 text-[18.75px] leading-[22px] tracking-[-0.24px] text-[#33383a]">competition.iteindia.in</span>
      <Glyph name="bell" size={16} className="mr-[19px] text-[#62686b]" />
      <Glyph name="comment" size={16} className="mr-[11px] text-[#62686b]" />
      <span className="w-[83px] text-[15px] leading-[21px] text-[#2869a2]">Admin User</span>
      <svg width="35" height="35" viewBox="0 0 35 35" className="mr-[19px]">
        <circle cx="17.500" cy="17.500" r="17.500" fill="#a8adb0" />
        <path d="M17.500 8c-5 0-8 3.500-8 8 0 3.500 1.500 6 3.500 7.500L7.500 31.800a17.500 17.500 0 0 0 20 0L22 23.500c2-1.500 3.500-4 3.500-7.500 0-4.500-3-8-8-8z" fill="#b4b8bb" />
      </svg>
      <Caret />
    </div>
  );
}

function SideItem({ icon, label, active = false, indent = false, dark = false }: { icon: React.ReactNode; label: string; active?: boolean; indent?: boolean; dark?: boolean }) {
  return (
    <div
      className={`-mb-px flex h-[48.5px] shrink-0 items-center border pb-px text-[15px] leading-[21px] tracking-[-0.06px] ${
        active ? "relative border-[#2869a2] bg-[#2869a2] font-bold text-[#c3cad0]" : `border-[#a2a6a9] bg-[#b4b8bb] ${dark ? "text-[#33383b]" : "text-[#464e56]"}`
      } ${indent ? "pl-9" : "pl-5"}`}
    >
      <span className="flex w-6 items-center overflow-visible">{icon}</span>
      <span>{label}</span>
    </div>
  );
}

function Sidebar() {
  const cap = <Glyph name="cap" />;
  const folder = <Glyph name="folder" />;
  return (
    <div className="flex h-full w-[285px] shrink-0 bg-[#abafb2]">
      <div className="flex flex-1 flex-col gap-[17px] pl-5 pr-[19px] pt-[19px]">
        <div className="flex flex-col">
          <SideItem icon={cap} label="Coding" active />
          <SideItem icon={<Glyph name="users" />} label="Participants" />
          <SideItem icon={<Glyph name="shield" />} label="Badges" />
          <SideItem icon={<Glyph name="check" />} label="Competencies" />
          <SideItem icon={<TableIcon />} label="Grades" />
          <SideItem icon={folder} label="General" />
          <SideItem icon={folder} label="Java" />
          <SideItem icon={folder} label="C & C++" />
          <SideItem icon={folder} label="Javascript" />
          <SideItem icon={folder} label="Python" />
        </div>
        <div className="flex flex-col">
          <SideItem icon={<GaugeIcon />} label="Dashboard" />
          <SideItem icon={<Glyph name="home" />} label="Site home" />
          <SideItem icon={<CalendarIcon />} label="Calendar" />
          <SideItem icon={<Glyph name="file" />} label="Private files" />
          <SideItem icon={cap} label="My courses" dark />
          <SideItem icon={cap} label="Coding" active indent />
        </div>
        <div className="flex flex-col">
          <SideItem icon={<Glyph name="wrench" />} label="Site administration" />
        </div>
        <div className="flex flex-col">
          <SideItem icon={null} label="" />
        </div>
      </div>
      <div className="flex w-[13px] justify-center border-l border-[#85898c] bg-[#909497] pt-[2px]">
        <div className="h-[850px] w-[6px] rounded-full bg-[#666a6d]" />
      </div>
    </div>
  );
}

function EditMenu() {
  return (
    <span className="flex items-center text-[#2869a2]">
      <span className="w-[33px] tracking-[-0.1px]">Edit</span>
      <Caret />
    </span>
  );
}

function Activity({ name, kind, done = true }: { name: string; kind: string; done?: boolean }) {
  return (
    <div className="flex h-9 text-[15px] leading-[21px]">
      <Glyph name="arrows" className="ml-[35px] mt-[10px] text-[#3a3f42]" />
      <span className="ml-4 mt-2">
        <Pic kind={kind} dim />
      </span>
      <span className="ml-[6px] mt-3 flex flex-1 gap-[4px] text-[#2869a2]">
        <span className={done ? "tracking-[-0.23px]" : "tracking-[-0.12px]"}>{name}</span>
        <Glyph name="pencil" className="mt-[3px] text-[#3a3f42]" />
      </span>
      <span className="mt-2 flex h-[21px] w-[124px] items-center">
        <EditMenu />
        <Glyph name="user" className="ml-[9px] text-[#2869a2]" />
        {done && (
          <svg width="16" height="16" viewBox="0 0 16 16" fill="none" stroke="#75797c" className="ml-[15px] mt-[2px]">
            <path d="M15 9v5.200a.8.800 0 0 1-.8.800H1.800a.8.800 0 0 1-.8-.8V1.800A.8.800 0 0 1 1.800 1h12.400a.8.800 0 0 1 .8.800V3" strokeWidth="2" />
            <path d="M3.800 8l3.200 3.400 8-7.200" strokeWidth="2.600" />
          </svg>
        )}
      </span>
    </div>
  );
}

function AddLink({ className }: { className: string }) {
  return (
    <div className={`flex items-start justify-end text-[15px] leading-[21px] tracking-[-0.09px] text-[#2869a2] ${className}`}>
      <Glyph name="plus" size={16} className="mr-[8px] mt-[2px]" />
      Add an activity or resource
    </div>
  );
}

function Section({ title, items, empty = false }: { title: string; items: string[]; empty?: boolean }) {
  return (
    <div>
      <div className="flex h-[59px] items-start border-t border-[#a2a6a9]">
        <Glyph name="arrows" className="ml-[6px] mt-[26px] text-[#3a3f42]" />
        <span className="ml-[14px] mt-4 text-[26.25px] leading-[30px] text-[#2869a2]">{title}</span>
        <Glyph name="pencil" className="ml-[7px] mt-[26px] text-[#3a3f42]" />
        <span className="ml-auto mr-[6px] mt-[24px] text-[15px] leading-[21px]">
          <EditMenu />
        </span>
      </div>
      {items.map((t) => (
        <Activity key={t} name={t} kind="vpl" />
      ))}
      <AddLink className={empty ? "h-[60px] pt-1" : "h-[60px] pt-[21px]"} />
    </div>
  );
}

function Main() {
  return (
    <div className="flex flex-1 flex-col pl-[15px] pr-[27px] pt-[15px]">
      <div className="flex h-[126px] shrink-0 justify-between border border-[#a2a6a9] px-5">
        <div>
          <h1 className="mt-[22px] text-[37.5px] leading-[42px] tracking-[-0.1px] text-[#3a3f42]">Programming</h1>
          <div className="mt-[13px] flex text-[15px] leading-[21px] text-[#2869a2]">
            <span className="w-[72px] tracking-[-0.08px]">Dashboard</span>
            <span className="ml-[7.500px] text-[#6d7377]">/</span>
            <span className="ml-[7.500px] w-[78px] text-[#33383b]">My courses</span>
            <span className="ml-2 text-[#6d7377]">/</span>
            <span className="ml-3 tracking-[-0.1px]">Coding</span>
          </div>
        </div>
        <div className="mt-[24px] flex h-6 items-center gap-[15px] text-[#2869a2]">
          <Glyph name="cog" size={24} />
          <span className="mt-1">
            <Caret />
          </span>
        </div>
      </div>
      <div className="mt-4 flex-1 border border-b-0 border-[#a2a6a9] px-5">
        <div className="h-[158px]">
          <div className="flex justify-end pr-[6px] pt-[45px] text-[15px] leading-[21px]">
            <EditMenu />
          </div>
          <div className="-mt-[4px]">
            <Activity name="Announcements" kind="forum" done={false} />
          </div>
          <AddLink className="pt-[21px]" />
        </div>
        <Section title="Java" items={["Addition of two integer"]} />
        <Section title="C & C++" items={["Addition of integer in C", "Addition of integer in C++"]} />
        <Section title="Javascript" items={["Addition of integer"]} />
        <Section title="Python" items={[]} empty />
      </div>
    </div>
  );
}

/* ---------- chooser dialog ---------- */
function Option({ kind, label, selected = false, tall = false }: { kind: string; label: string; selected?: boolean; tall?: boolean }) {
  return (
    <div className={`shrink-0 pl-6 pr-6 ${selected ? "bg-white" : ""}`}>
      <div className={`flex items-center border-b border-white ${tall ? "h-[53px]" : "h-[41px]"}`}>
        <span className="relative flex h-4 w-4 items-center justify-center rounded-full border border-[#979795] bg-gradient-to-b from-[#fbfbfb] to-[#e6e6e5] shadow-[0_1px_1px_rgba(0,0,0,0.25)]">
          {selected && (
            <>
              <span className="h-[6px] w-[6px] rounded-full bg-[#2e3436]" />
              <span className="absolute -inset-[2px] border border-dotted border-black" />
            </>
          )}
        </span>
        <span className="ml-[19px]">
          <Pic kind={kind} />
        </span>
        <span className="ml-[19px] w-[98px] text-[12px] leading-[18px] tracking-[0.1px] text-[#373a3c]">{label}</span>
      </div>
    </div>
  );
}

function Dialog() {
  return (
    <div className="absolute left-[690px] top-[199px] flex h-[820px] w-[540px] flex-col border border-[#8d9194] bg-white">
      <div className="flex h-[69px] shrink-0 justify-between border-b border-[#e6e9ec] pl-4 pr-[17px]">
        <h2 className="mt-[20px] text-[24px] leading-[27px] tracking-[-0.06px] text-black">Add an activity or resource</h2>
        <Cross size={11} width={2.600} className="mt-[22px] text-[#7f7f7f]" />
      </div>
      <div className="flex h-[690px] shrink-0">
        <div className="flex w-[228px] flex-col overflow-hidden bg-[#f1f1f1]">
          <Option kind="glossary" label="Glossary" />
          <Option kind="lesson" label="Lesson" />
          <Option kind="quiz" label="Quiz" />
          <Option kind="scorm" label="SCORM package" />
          <Option kind="survey" label="Survey" />
          <Option kind="vpl" label="Virtual programming lab" selected tall />
          <Option kind="wiki" label="Wiki" />
          <Option kind="workshop" label="Workshop" />
          <h3 className="h-[54px] shrink-0 pl-6 pt-[18px] text-[15px] leading-[21px] text-[#373a3c]">RESOURCES</h3>
          <Option kind="book" label="Book" />
          <Option kind="file" label="File" />
          <Option kind="folder" label="Folder" />
          <Option kind="ims" label="IMS content package" tall />
          <Option kind="label" label="Label" />
          <Option kind="page" label="Page" />
          <Option kind="url" label="URL" />
        </div>
        <div className="flex w-3 justify-center border-l border-[#b4b6b6] bg-[#c3c5c5] pr-px pt-[244px]">
          <div className="h-[441px] w-[6px] rounded-full bg-[#777a7b]" />
        </div>
        <div className="flex-1 pl-[19px] pr-4 pt-[19px] text-[12px] leading-6 tracking-[0.13px] text-[#373a3c]">
          <p>
            VPL is a activity module for Moodle that
            <br />
            manage programming assignments and whose
            <br />
            salient features are:
          </p>
          <ul className="my-4 list-outside list-disc pl-4">
            <li>
              Enable to edit the programs source code in
              <br />
              the browser
            </li>
            <li>
              Students can run interactively programs in
              <br />
              the browser
            </li>
            <li>You can run tests to review the programs.</li>
            <li>Allows searching for similarity between files.</li>
            <li>
              Allows setting editing restrictions and
              <br />
              avoiding external text pasting.
            </li>
          </ul>
          <p className="text-[#1177d1]">Virtual Programming lab Home Page</p>
          <p className="mt-4 flex text-[#1177d1]">
            <Glyph name="info" size={16} className="ml-4 mr-4 mt-[2px]" />
            More help
          </p>
        </div>
      </div>
      <div className="flex flex-1 justify-end gap-[19px] border-t border-[#b8b8b8] bg-[#f1f1f1] pr-[7px] pt-[11px]">
        <button className="h-9 w-[100px] border border-[#0d5699] bg-[#0f64ae] text-[15px] text-[#f1f5f9]">Add</button>
        <button className="h-9 w-[100px] bg-[#e9ecef] text-[15px] text-[#2b2f32]">Cancel</button>
      </div>
    </div>
  );
}

export default function App() {
  return (
    <div className="relative flex h-[1080px] w-[1920px] flex-col overflow-hidden bg-[#b4b8bb] font-['Noto_Sans',sans-serif]">
      <TopBar />
      <TitleBar />
      <TabStrip />
      <ToolBar />
      <div className="flex min-h-0 flex-1 flex-col font-['Liberation_Sans',Arial,sans-serif]">
        <NavBar />
        <div className="flex min-h-0 flex-1">
          <Sidebar />
          <Main />
        </div>
      </div>
      <div className="font-['Liberation_Sans',Arial,sans-serif]">
        <Dialog />
      </div>
    </div>
  );
}
